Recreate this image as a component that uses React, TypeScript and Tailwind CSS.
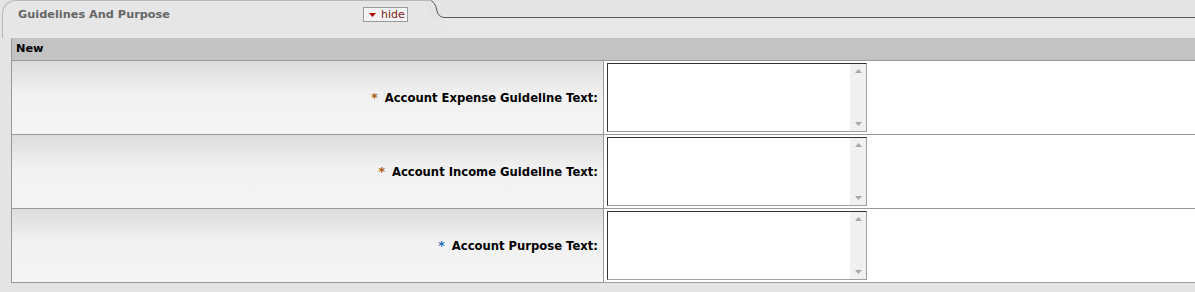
import React from "react";

const rows = [
  { label: "Account Expense Guideline Text:", star: "text-[#b0560e]" },
  { label: "Account Income Guideline Text:", star: "text-[#b0560e]" },
  { label: "Account Purpose Text:", star: "text-[#1f6fc0]" },
];

function FakeTextarea() {
  return (
    <div className="flex h-[69px] w-[260px] border border-t-[#333] border-l-[#333] border-b-[#a0a0a0] border-r-[#a0a0a0] bg-white">
      <div className="flex-1" />
      <div className="flex w-[16px] flex-col items-center justify-between bg-[#f0f0f0] py-[5px]">
        <svg width="7" height="4" viewBox="0 0 7 4">
          <path d="M0 4 L3.5 0 L7 4 Z" fill="#a8a8a8" />
        </svg>
        <svg width="7" height="4" viewBox="0 0 7 4">
          <path d="M0 0 L3.5 4 L7 0 Z" fill="#a8a8a8" />
        </svg>
      </div>
    </div>
  );
}

export default function App() {
  return (
    <div
      className="relative h-[292px] w-[1195px] overflow-hidden bg-[#e4e4e4]"
      style={{ fontFamily: '"DejaVu Sans", Verdana, sans-serif' }}
    >
      {/* tab strip */}
      <div className="flex h-[38px]">
        <div className="relative h-[38px] w-[426px] rounded-tl-[14px] border-l border-t border-[#b8b8b8] ml-[2px] bg-[#e6e6e6]">
          <div className="flex h-[28px] items-center pl-[15px] text-[11.3px] font-bold text-[#666]">
            Guidelines And Purpose
          </div>
          <button className="absolute left-[360px] top-[6px] flex h-[15px] w-[45px] items-center gap-[5px] border border-[#9a9a9a] bg-[#f3f3f3] pl-[5px] text-[11px] leading-none text-[#7b1818]">
            <svg width="7" height="4" viewBox="0 0 7 4">
              <path d="M0 0 L7 0 L3.5 4 Z" fill="#b00000" />
            </svg>
            hide
          </button>
        </div>
        <svg width="16" height="38" viewBox="0 0 16 38" className="shrink-0">
          <rect x="0" y="18" width="16" height="20" fill="#e6e6e6" />
          <path d="M0 0 C6 0 8 6 9 11 C10 15 12 17 16 17.5" stroke="#555" strokeWidth="1" fill="none" />
          <path d="M0 0.5 L3 0.5" stroke="#b8b8b8" strokeWidth="1" />
        </svg>
        <div className="flex-1">
          <div className="h-[18px] border-b border-[#5a5a5a]" />
          <div className="h-[20px] bg-[#e7e7e7]" />
        </div>
      </div>

      {/* table */}
      <div className="ml-[11px] border-l border-[#999]">
        <div className="flex h-[23px] items-center border-b border-[#999] bg-[#c3c3c3] pl-[4px] text-[11.3px] font-bold text-black">
          New
        </div>
        {rows.map((r) => (
          <div key={r.label} className="flex h-[74px] border-b border-[#999]">
            <div className="flex w-[592px] items-center justify-end border-r border-[#999] bg-linear-to-b from-[#dcdcdc] via-[#f1f1f1] via-45% to-[#f5f5f5] pr-[5px] pt-[2px] text-[11.6px] font-bold text-black">
              <span className={`${r.star} mr-[7px] text-[12.5px]`}>*</span>
              <span>{r.label}</span>
            </div>
            <div className="flex-1 bg-white pl-[3px] pt-[2px]">
              <FakeTextarea />
            </div>
          </div>
        ))}
      </div>
    </div>
  );
}
